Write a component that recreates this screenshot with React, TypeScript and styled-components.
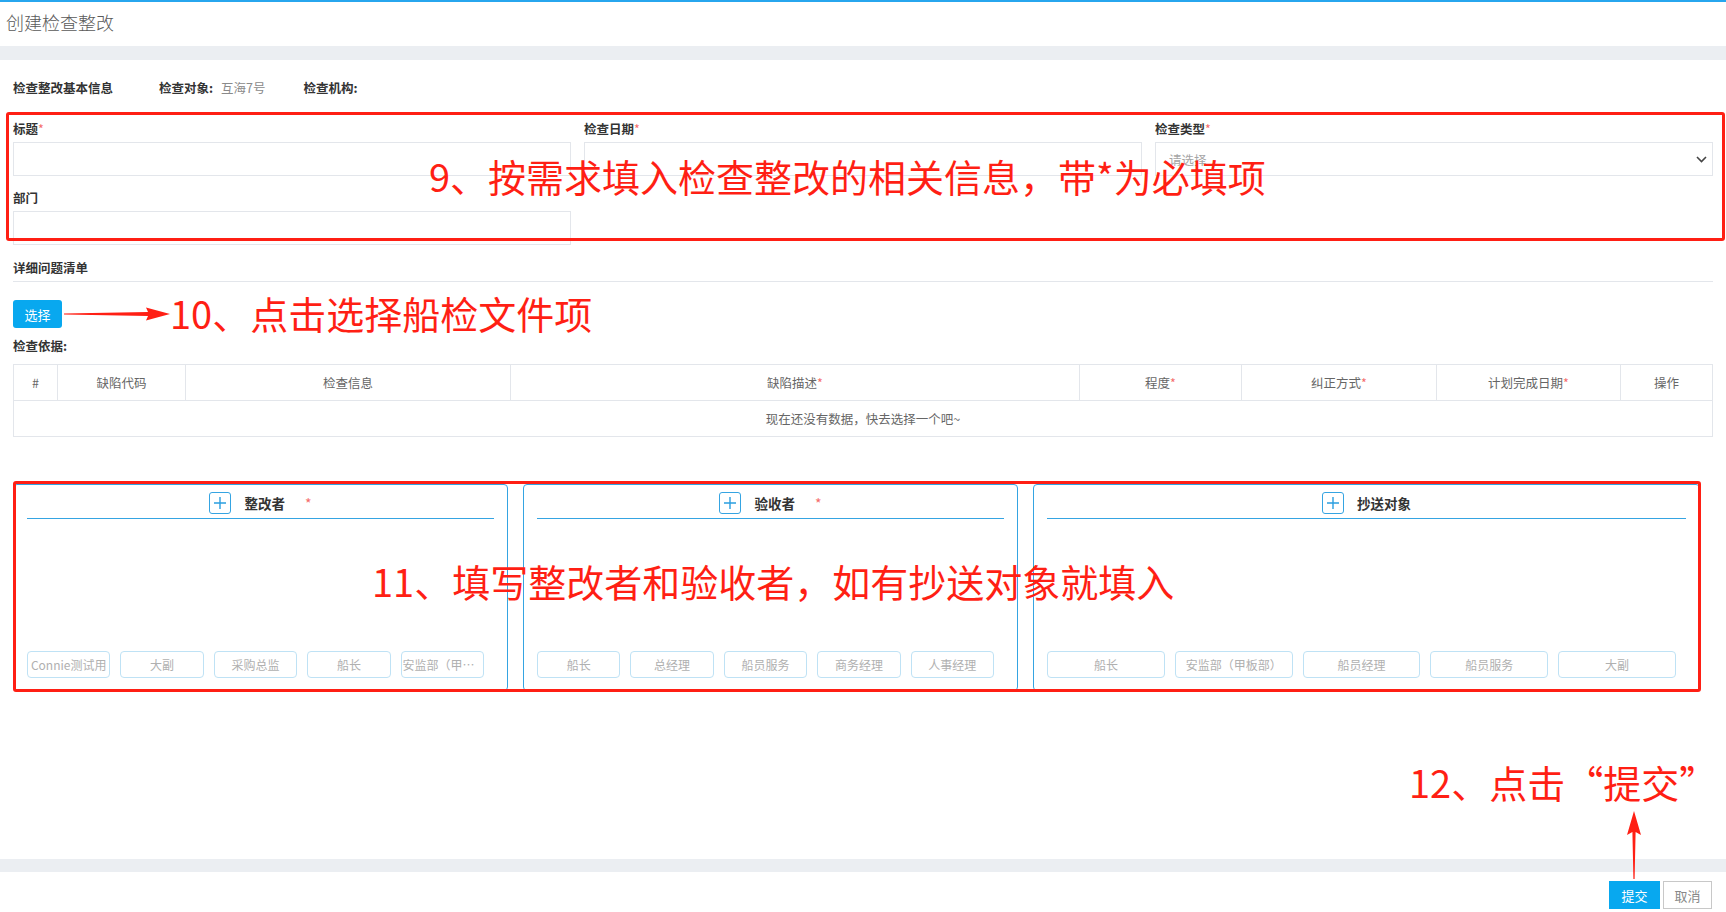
import React from "react";
import styled, { createGlobalStyle } from "styled-components";

const GlobalStyle = createGlobalStyle`
  html, body {
    margin: 0;
    padding: 0;
    background: #fff;
  }
  body {
    font-family: "Noto Sans CJK SC", "Noto Sans", sans-serif;
    font-size: 12.5px;
    color: #333;
  }
  * {
    box-sizing: border-box;
  }
`;

const ANNOT_RED = "#ff1f14";

const columns = [
  { title: "#", width: 44 },
  { title: "缺陷代码", width: 128 },
  { title: "检查信息", width: 325 },
  { title: "缺陷描述", width: 569, required: true },
  { title: "程度", width: 162, required: true },
  { title: "纠正方式", width: 195, required: true },
  { title: "计划完成日期", width: 184, required: true },
  { title: "操作", width: 92 },
];

const panels = [
  {
    title: "整改者",
    required: true,
    tags: ["Connie测试用", "大副", "采购总监", "船长", "安监部（甲板部）"],
  },
  {
    title: "验收者",
    required: true,
    tags: ["船长", "总经理", "船员服务", "商务经理", "人事经理"],
  },
  {
    title: "抄送对象",
    required: false,
    tags: ["船长", "安监部（甲板部）", "船员经理", "船员服务", "大副"],
  },
];

const PlusIcon = () => (
  <svg width="14" height="14" viewBox="0 0 14 14">
    <path d="M7 1v12M1 7h12" stroke="#2a9ee0" strokeWidth="1.4" fill="none" />
  </svg>
);

const Chevron = () => (
  <svg width="11" height="7" viewBox="0 0 11 7">
    <path d="M1 1l4.5 4.5L10 1" stroke="#444" strokeWidth="1.6" fill="none" />
  </svg>
);

const App: React.FC = () => {
  return (
    <Page>
      <GlobalStyle />
      <Header>
        <Title>创建检查整改</Title>
      </Header>
      <GrayBand />

      <Content>
        <InfoRow>
          <InfoHead>检查整改基本信息</InfoHead>
          <InfoItem>
            检查对象:<InfoValue>互海7号</InfoValue>
          </InfoItem>
          <InfoItem>检查机构:</InfoItem>
        </InfoRow>

        <FormBlock>
          <FormGrid>
            <Field>
              <Label>
                标题<Star>*</Star>
              </Label>
              <Input />
            </Field>
            <Field>
              <Label>
                检查日期<Star>*</Star>
              </Label>
              <Input />
            </Field>
            <Field>
              <Label>
                检查类型<Star>*</Star>
              </Label>
              <SelectBox>
                <Placeholder>请选择</Placeholder>
                <Chevron />
              </SelectBox>
            </Field>
            <Field>
              <Label>部门</Label>
              <Input />
            </Field>
          </FormGrid>
          <Annotation $left={416} $top={37}>
            9、按需求填入检查整改的相关信息，带*为必填项
          </Annotation>
        </FormBlock>

        <SectionTitle>详细问题清单</SectionTitle>

        <ToolRow>
          <PrimaryButton>选择</PrimaryButton>
          <ArrowRight width="106" height="16" viewBox="0 0 106 16">
            <polygon
              points="0,7.6 84,6 82,1.5 106,8 82,14.5 84,10 0,8.6"
              fill={ANNOT_RED}
            />
          </ArrowRight>
          <Annotation $left={157} $top={-6}>
            10、点击选择船检文件项
          </Annotation>
        </ToolRow>

        <BasisLabel>检查依据:</BasisLabel>

        <Table>
          <colgroup>
            {columns.map((c) => (
              <col key={c.title} style={{ width: c.width }} />
            ))}
          </colgroup>
          <thead>
            <tr>
              {columns.map((c) => (
                <Th key={c.title}>
                  {c.title}
                  {c.required && <Star>*</Star>}
                </Th>
              ))}
            </tr>
          </thead>
          <tbody>
            <tr>
              <EmptyCell colSpan={columns.length}>
                现在还没有数据，快去选择一个吧~
              </EmptyCell>
            </tr>
          </tbody>
        </Table>

        <PanelRow>
          {panels.map((p) => (
            <Panel key={p.title}>
              <PanelHead>
                <PlusBox>
                  <PlusIcon />
                </PlusBox>
                <PanelTitle>{p.title}</PanelTitle>
                {p.required && <PanelStar>*</PanelStar>}
              </PanelHead>
              <TagGrid>
                {p.tags.map((t) => (
                  <Tag key={t}>{t}</Tag>
                ))}
              </TagGrid>
            </Panel>
          ))}
          <Annotation $left={359} $top={78}>
            11、填写整改者和验收者，如有抄送对象就填入
          </Annotation>
        </PanelRow>
      </Content>

      <GrayBand $height={13} />
      <Footer>
        <SubmitButton>提交</SubmitButton>
        <CancelButton>取消</CancelButton>
      </Footer>

      <Annotation $left={1409} $top={761}>
        12、点击“提交”
      </Annotation>
      <ArrowUp width="16" height="68" viewBox="0 0 16 68">
        <polygon points="8,0 15,24 9.6,21 8.6,68 7.4,68 6.4,21 1,24" fill={ANNOT_RED} />
      </ArrowUp>
    </Page>
  );
};

export default App;

const Page = styled.div`
  position: relative;
  height: 912px;
  display: flex;
  flex-direction: column;
  border-top: 2px solid #27a6ee;
  overflow: hidden;
`;

const Header = styled.div`
  height: 44px;
  display: flex;
  align-items: center;
  padding: 0 0 4px 6px;
`;

const Title = styled.div`
  font-size: 18px;
  line-height: 24px;
  color: #5a5a5a;
  font-weight: 300;
`;

const GrayBand = styled.div<{ $height?: number }>`
  height: ${(p) => p.$height ?? 14}px;
  background: #ebeef2;
  flex-shrink: 0;
`;

const Content = styled.div`
  flex: 1;
  padding: 0 13px;
`;

const InfoRow = styled.div`
  display: flex;
  align-items: center;
  padding-top: 18px;
  line-height: 20px;
  font-weight: 700;
  color: #333;
`;

const InfoHead = styled.span`
  margin-right: 46px;
`;

const InfoItem = styled.span`
  margin-right: 38px;
`;

const InfoValue = styled.span`
  font-weight: 400;
  color: #8a8a8a;
  margin-left: 8px;
`;

const FormBlock = styled.div`
  position: relative;
  margin-top: 22px;

  &::after {
    content: "";
    position: absolute;
    top: -8px;
    left: -7px;
    right: -12px;
    bottom: 4px;
    border: 3px solid ${ANNOT_RED};
    border-radius: 3px;
    pointer-events: none;
  }
`;

const FormGrid = styled.div`
  display: grid;
  grid-template-columns: repeat(3, 1fr);
  column-gap: 13px;
  row-gap: 13px;
`;

const Field = styled.div`
  display: flex;
  flex-direction: column;
  gap: 4px;
`;

const Label = styled.div`
  line-height: 18px;
  font-weight: 700;
  color: #333;
`;

const Star = styled.span`
  color: #f56c6c;
  font-weight: 400;
`;

const Input = styled.div`
  height: 34px;
  border: 1px solid #e3e6eb;
  background: #fff;
`;

const SelectBox = styled.div`
  height: 34px;
  border: 1px solid #e3e6eb;
  display: flex;
  align-items: center;
  justify-content: space-between;
  padding: 0 5px 0 13px;
`;

const Placeholder = styled.span`
  color: #a5a5a5;
  font-size: 12.5px;
`;

const Annotation = styled.div<{ $left: number; $top: number }>`
  position: absolute;
  left: ${(p) => p.$left}px;
  top: ${(p) => p.$top}px;
  font-family: "Noto Sans CJK SC", sans-serif;
  font-size: 38px;
  line-height: 38px;
  color: ${ANNOT_RED};
  white-space: nowrap;
  pointer-events: none;
`;

const SectionTitle = styled.div`
  margin-top: 14px;
  line-height: 18px;
  padding-bottom: 4px;
  border-bottom: 1px solid #e3e6eb;
  font-weight: 700;
  color: #333;
`;

const ToolRow = styled.div`
  position: relative;
  margin-top: 18px;
  height: 28px;
  display: flex;
  align-items: center;
`;

const PrimaryButton = styled.button`
  width: 49px;
  height: 28px;
  border: none;
  border-radius: 3px;
  background: #08a8ef;
  color: #fff;
  font-family: inherit;
  font-size: 13px;
  padding: 0;
`;

const ArrowRight = styled.svg`
  position: absolute;
  left: 51px;
  top: 6px;
`;

const BasisLabel = styled.div`
  margin-top: 9px;
  line-height: 18px;
  font-weight: 700;
  color: #333;
`;

const Table = styled.table`
  margin-top: 9px;
  width: 1700px;
  border-collapse: collapse;
  table-layout: fixed;
`;

const Th = styled.th`
  height: 36px;
  border: 1px solid #e3e6eb;
  font-weight: 400;
  color: #666;
  text-align: center;
  padding: 0;
`;

const EmptyCell = styled.td`
  height: 36px;
  border: 1px solid #e3e6eb;
  color: #666;
  text-align: center;
`;

const PanelRow = styled.div`
  position: relative;
  margin-top: 47px;
  padding-right: 13px;
  display: grid;
  grid-template-columns: 495px 495px 1fr;
  column-gap: 15px;

  &::after {
    content: "";
    position: absolute;
    top: -3px;
    left: 0;
    right: 12px;
    bottom: -1px;
    border: 3px solid ${ANNOT_RED};
    border-radius: 3px;
    pointer-events: none;
  }
`;

const Panel = styled.div`
  height: 207px;
  border: 1px solid #35a4e2;
  border-radius: 4px;
  padding: 7px 13px 12px;
  display: flex;
  flex-direction: column;
`;

const PanelHead = styled.div`
  display: flex;
  align-items: center;
  justify-content: center;
  border-bottom: 1px solid #35a4e2;
  padding-bottom: 4px;
`;

const PlusBox = styled.div`
  width: 22px;
  height: 22px;
  border: 1px solid #35a4e2;
  border-radius: 3px;
  display: flex;
  align-items: center;
  justify-content: center;
`;

const PanelTitle = styled.span`
  margin-left: 13px;
  font-size: 13.5px;
  line-height: 22px;
  font-weight: 700;
  color: #333;
`;

const PanelStar = styled.span`
  margin-left: 20px;
  color: #f56c6c;
  font-size: 14px;
  line-height: 22px;
`;

const TagGrid = styled.div`
  margin-top: auto;
  display: grid;
  grid-template-columns: repeat(5, 1fr);
`;

const Tag = styled.div`
  margin-right: 10px;
  height: 27px;
  border: 1px solid #bfe2f5;
  border-radius: 4px;
  color: #b0b0b0;
  font-size: 12px;
  line-height: 25px;
  text-align: center;
  white-space: nowrap;
  overflow: hidden;
  text-overflow: ellipsis;
  padding: 0 1px;
`;

const Footer = styled.div`
  height: 40px;
  display: flex;
  justify-content: flex-end;
  align-items: flex-start;
  gap: 3px;
  padding: 9px 14px 0 0;
`;

const SubmitButton = styled.button`
  width: 51px;
  height: 28px;
  border: none;
  background: #08a8ef;
  color: #fff;
  font-family: inherit;
  font-size: 13px;
  padding: 0;
`;

const CancelButton = styled.button`
  width: 49px;
  height: 28px;
  border: 1px solid #c8c8c8;
  background: #fff;
  color: #888;
  font-family: inherit;
  font-size: 13px;
  padding: 0;
`;

const ArrowUp = styled.svg`
  position: absolute;
  left: 1626px;
  top: 809px;
`;
